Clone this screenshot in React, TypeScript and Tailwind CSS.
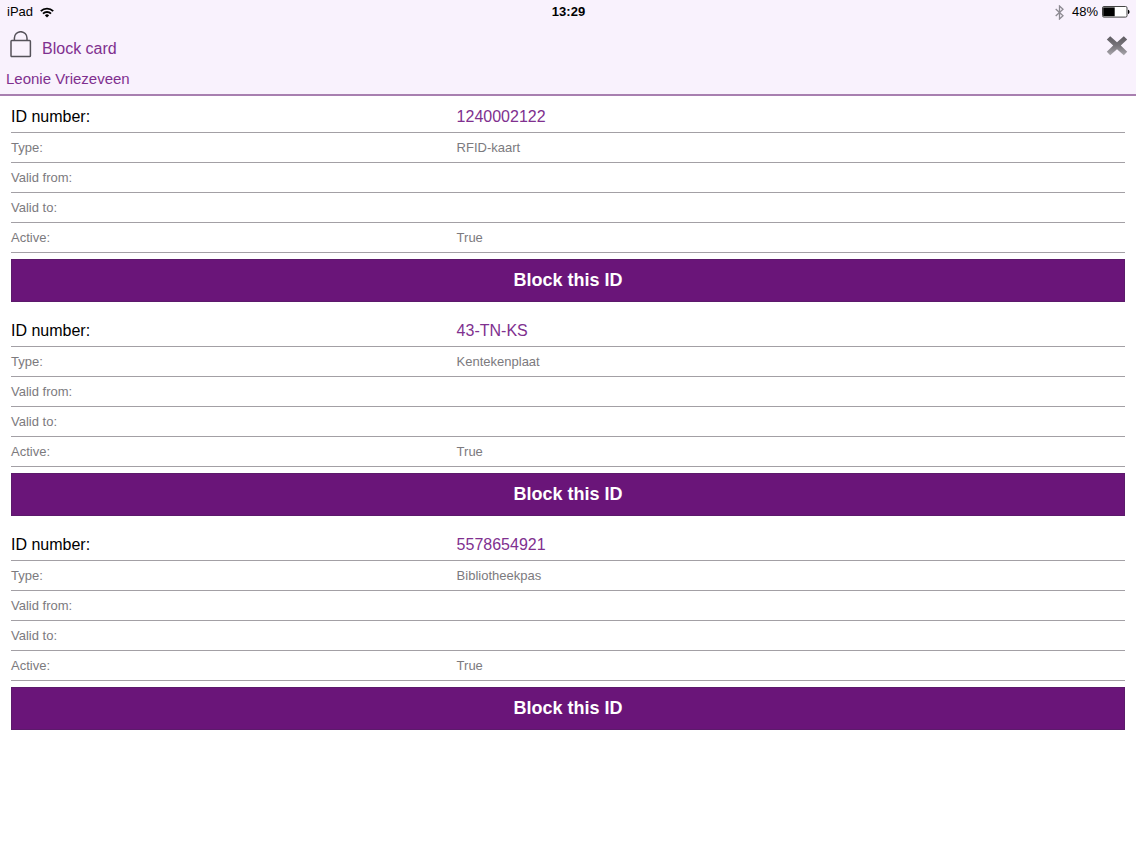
import React from 'react';

interface Card {
  id: string;
  type: string;
  validFrom: string;
  validTo: string;
  active: boolean;
}

const cards: Card[] = [
  { id: '1240002122', type: 'RFID-kaart', validFrom: '', validTo: '', active: true },
  { id: '43-TN-KS', type: 'Kentekenplaat', validFrom: '', validTo: '', active: true },
  { id: '5578654921', type: 'Bibliotheekpas', validFrom: '', validTo: '', active: true },
];

const WifiIcon = () => (
  <svg width="14" height="11" viewBox="0 0 14 11" fill="none" stroke="#000" strokeWidth="1.9" aria-hidden="true">
    <path d="M0.8 4.2a8.8 8.8 0 0 1 12.4 0" />
    <path d="M3 6.6a5.7 5.7 0 0 1 8 0" />
    <path d="M7 10.6 4.9 8.4a3 3 0 0 1 4.2 0z" fill="#000" stroke="none" />
  </svg>
);

const BluetoothIcon = () => (
  <svg width="9" height="15" viewBox="0 0 9 15" fill="none" stroke="#8d8a92" strokeWidth="1.3" aria-hidden="true">
    <path d="M0.7 4 8 10.8 4.5 14V1L8 4.2 0.7 11" />
  </svg>
);

const BatteryIcon = () => (
  <svg width="28" height="12" viewBox="0 0 28 12" aria-hidden="true">
    <rect x="0.5" y="0.5" width="24.5" height="10.6" rx="1.4" fill="#fff" stroke="#444" />
    <rect x="1.2" y="1.4" width="11.5" height="8.8" fill="#000" />
    <path d="M26 3.8c2 .5 2 3.7 0 4.2z" fill="#000" />
  </svg>
);

const LockIcon = () => (
  <svg width="22" height="28" viewBox="0 0 22 28" fill="none" stroke="#55525a" strokeWidth="1.5" aria-hidden="true">
    <rect x="1" y="9.6" width="19.4" height="16" rx="0.8" />
    <path d="M4.4 9.6V7a6.3 6.3 0 0 1 12.6 0v2.6" />
  </svg>
);

const CloseIcon = () => (
  <svg width="22" height="20" viewBox="0 0 22 20" aria-hidden="true">
    <defs>
      <linearGradient id="close-fill" x1="0" y1="0" x2="0" y2="1">
        <stop offset="0" stopColor="#5f5c62" />
        <stop offset="0.5" stopColor="#77747a" />
        <stop offset="1" stopColor="#aaa7ad" />
      </linearGradient>
    </defs>
    <path
      d="M4.2 0.2 11 6.2 17.8 0.2 21.2 3.4 14.8 9.6 21.2 15.8 17.8 19.2 11 13.2 4.2 19.2 0.8 15.8 7.2 9.6 0.8 3.4z"
      fill="url(#close-fill)"
    />
  </svg>
);

const StatusBar = () => (
  <div className="grid grid-cols-3 items-center h-6 pl-[7px] pr-[6px] text-[13px] text-black">
    <div className="flex items-center gap-[7px]">
      <span>iPad</span>
      <WifiIcon />
    </div>
    <div className="text-center font-bold">13:29</div>
    <div className="flex items-center justify-end">
      <BluetoothIcon />
      <span className="ml-[8px] mr-1">48%</span>
      <BatteryIcon />
    </div>
  </div>
);

const CardDetails: React.FC<{ card: Card }> = ({ card }) => {
  const rows = [
    { label: 'Type:', value: card.type },
    { label: 'Valid from:', value: card.validFrom },
    { label: 'Valid to:', value: card.validTo },
    { label: 'Active:', value: card.active ? 'True' : 'False' },
  ];

  return (
    <section className="mb-[15px]">
      <table className="w-full table-fixed border-separate border-spacing-0 text-left text-[13px] text-[#7c7a7e]">
        <tbody>
          <tr className="h-[30px] text-base leading-5">
            <th scope="row" className="w-2/5 p-0 pb-[2px] border-b border-[#a3a0a5] font-normal text-black">ID number:</th>
            <td className="p-0 pb-[2px] border-b border-[#a3a0a5] text-[#80308f]">{card.id}</td>
          </tr>
          {rows.map((row) => (
            <tr key={row.label} className="h-[30px]">
              <th scope="row" className="p-0 border-b border-[#a3a0a5] font-normal">{row.label}</th>
              <td className="p-0 border-b border-[#a3a0a5]">{row.value}</td>
            </tr>
          ))}
        </tbody>
      </table>
      <button
        type="button"
        className="mt-[6px] block h-[43px] w-full border border-[#5c1a6b] bg-[#6a1579] pb-[2px] text-lg font-bold text-white"
      >
        Block this ID
      </button>
    </section>
  );
};

const App: React.FC = () => {
  return (
    <div className="min-h-screen bg-white font-['Liberation_Sans',Arial,sans-serif]">
      <header className="border-b-2 border-[#a87fb0] bg-[#f9f2fd]">
        <StatusBar />
        <div className="flex items-start justify-between pt-[7px] pl-[10px] pr-[8px]">
          <h1 className="flex items-end gap-[10px] text-base text-[#80308f]">
            <LockIcon />
            <span className="leading-5">Block card</span>
          </h1>
          <button type="button" aria-label="Close" className="mt-[5px]">
            <CloseIcon />
          </button>
        </div>
        <p className="pt-[8px] pb-[3px] pl-[6px] text-[15px] leading-6 text-[#80308f]">Leonie Vriezeveen</p>
      </header>

      <main className="px-[11px] pt-[7px]">
        {cards.map((card) => (
          <CardDetails key={card.id} card={card} />
        ))}
      </main>
    </div>
  );
};

export default App;
